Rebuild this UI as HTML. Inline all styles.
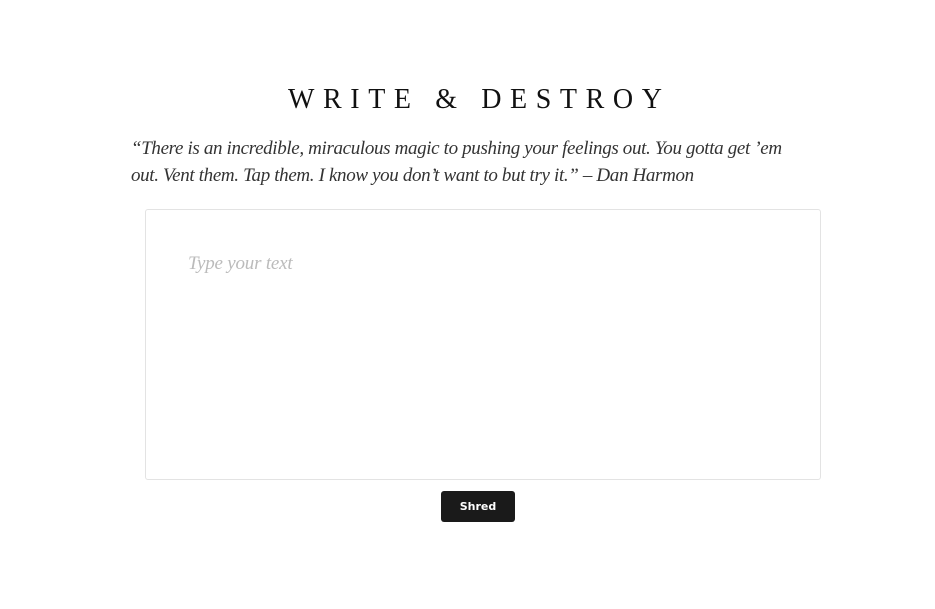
<!DOCTYPE html>
<html><head><style>
body{margin:0;background:#fff;width:935px;height:609px;position:relative;overflow:hidden;font-family:"Liberation Serif",serif;}
h1{position:absolute;left:288px;top:84px;margin:0;white-space:nowrap;font-weight:normal;font-size:28px;letter-spacing:8.6px;color:#111;}
.q{position:absolute;left:131px;top:136px;white-space:nowrap;font-style:italic;font-size:19px;line-height:26.5px;color:#333;letter-spacing:-0.35px;}
.box{position:absolute;left:145px;top:209px;width:674px;height:269px;border:1px solid #e3e3e3;border-radius:3px;}
.ph{position:absolute;left:188px;top:253px;font-style:italic;font-size:19px;color:#bbb;letter-spacing:-0.2px;}
.btn{position:absolute;left:441px;top:491px;width:74px;height:31px;background:#1a1a1a;border-radius:3px;color:#fff;font-family:"DejaVu Sans",sans-serif;font-size:11px;font-weight:bold;text-align:center;line-height:31px;}
</style></head><body>
<h1>WRITE &amp; DESTROY</h1>
<div class="q">“There is an incredible, miraculous magic to pushing your feelings out. You gotta get ’em<br>out. Vent them. Tap them. I know you don’t want to but try it.” – Dan Harmon</div>
<div class="box"></div>
<div class="ph">Type your text</div>
<div class="btn">Shred</div>
</body></html>
